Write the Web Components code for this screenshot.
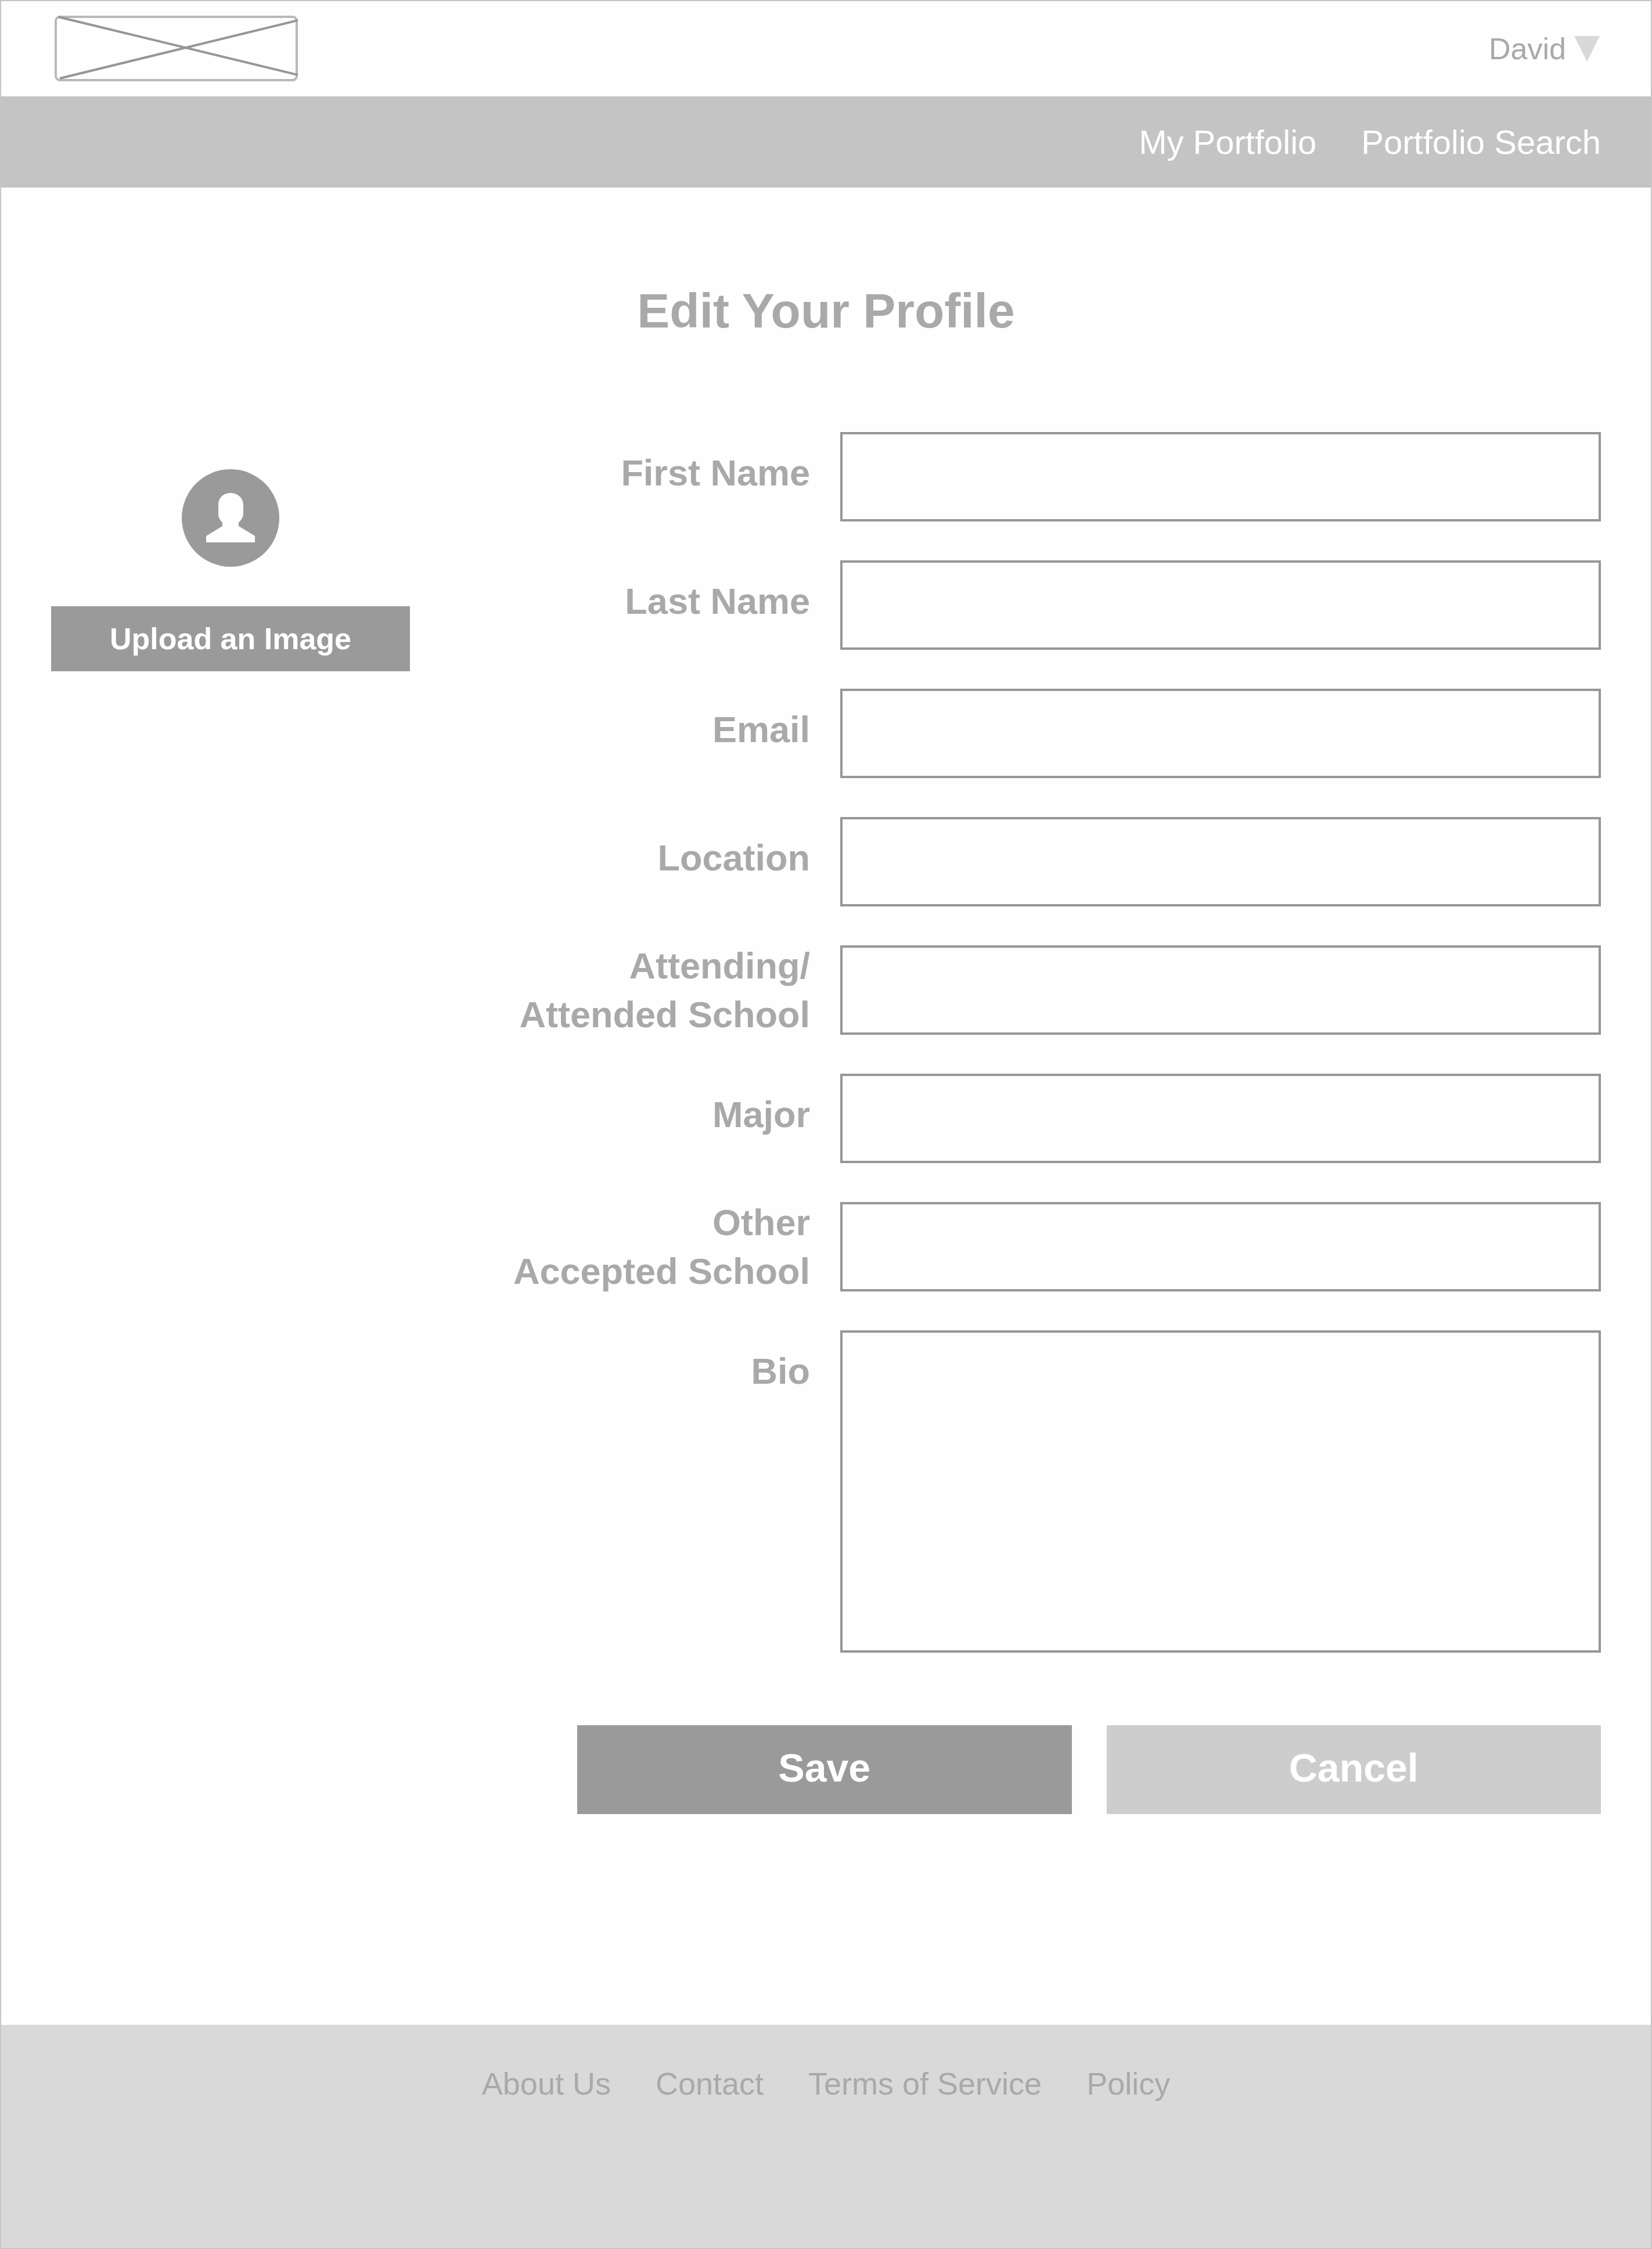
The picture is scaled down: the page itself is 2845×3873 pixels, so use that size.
<!DOCTYPE html>
<html lang="en">
<head>
<meta charset="utf-8">
<meta name="viewport" content="width=device-width, initial-scale=1">
<title>Edit Your Profile</title>
<style>
  html, body { margin: 0; height: 100%; }
  body {
    font-family: "Liberation Sans", Arial, Helvetica, sans-serif;
    color: #a9a9a9;
    background: #fefefe;
    --gutter: 86px;
    --accent: #9a9a9a;
    --muted: #cdcdcd;
    --line: #969696;
  }
</style>
</head>
<body>
<app-shell>
  <site-header slot="header">David</site-header>
  <site-nav slot="nav">
    <nav-link href="#portfolio">My Portfolio</nav-link>
    <nav-link href="#search">Portfolio Search</nav-link>
  </site-nav>
  <profile-editor heading="Edit Your Profile">
    <avatar-upload slot="aside">Upload an Image</avatar-upload>
    <form-field name="first">First Name</form-field>
    <form-field name="last">Last Name</form-field>
    <form-field name="email" type="email">Email</form-field>
    <form-field name="location">Location</form-field>
    <form-field name="school" stacked>Attending/<br>Attended School</form-field>
    <form-field name="major">Major</form-field>
    <form-field name="other" stacked>Other<br>Accepted School</form-field>
    <form-field name="bio" multiline>Bio</form-field>
    <action-button slot="actions">Save</action-button>
    <action-button slot="actions" secondary>Cancel</action-button>
  </profile-editor>
  <site-footer slot="footer">
    <nav-link href="#about">About Us</nav-link>
    <nav-link href="#contact">Contact</nav-link>
    <nav-link href="#terms">Terms of Service</nav-link>
    <nav-link href="#policy">Policy</nav-link>
  </site-footer>
</app-shell>

<script>
const define = (name, render) => customElements.define(name, class extends HTMLElement {
  constructor() {
    super();
    this.attachShadow({ mode: 'open' });
  }
  connectedCallback() {
    this.shadowRoot.innerHTML = render(this);
  }
});

define('app-shell', () => `
  <style>
    :host { display: flex; flex-direction: column; box-sizing: border-box; min-height: 100%; border: 2px solid #c6c6c6; }
    main { display: block; }
    ::slotted([slot="footer"]) { flex: 1; }
  </style>
  <slot name="header"></slot>
  <slot name="nav"></slot>
  <main><slot></slot></main>
  <slot name="footer"></slot>`);

define('site-header', () => `
  <style>
    :host { display: block; }
    header { display: flex; align-items: center; justify-content: space-between; height: 164px; padding: 0 var(--gutter); }
    a { display: block; padding-left: 4px; }
    svg { display: block; }
    button { display: flex; align-items: center; gap: 14px; padding: 0 2px 0 0; border: 0; background: none; font: inherit; font-size: 52px; line-height: 64px; color: inherit; cursor: pointer; }
  </style>
  <header>
    <a href="#home" aria-label="Home">
      <svg width="424" height="116" viewBox="0 0 424 116" fill="none">
        <rect x="4" y="3" width="415" height="109" rx="7" stroke="#b9b9b9" stroke-width="4"/>
        <path d="M8 3 421 103M11 109 421 9" stroke="#969696" stroke-width="4"/>
      </svg>
    </a>
    <button type="button" aria-haspopup="menu">
      <span><slot></slot></span>
      <svg width="44" height="44" viewBox="0 0 44 44"><path d="M0 0H44L22 44Z" fill="#d8d8d8"/></svg>
    </button>
  </header>`);

define('site-nav', () => `
  <style>
    :host { display: block; background: #c4c4c4; color: #fff; }
    nav { display: flex; align-items: center; justify-content: flex-end; gap: 77px; min-height: 157px; padding: 0 var(--gutter); font-size: 58px; line-height: 72px; }
  </style>
  <nav><slot></slot></nav>`);

define('nav-link', el => `
  <style>
    :host { display: block; white-space: nowrap; }
    a { color: inherit; text-decoration: none; }
  </style>
  <a href="${el.getAttribute('href')}"><slot></slot></a>`);

define('profile-editor', el => `
  <style>
    :host { display: block; padding: 164px var(--gutter) 363px; }
    h1 { margin: 0 0 161px; font-size: 84px; line-height: 96px; text-align: center; }
    .columns { display: flex; align-items: flex-start; }
    aside { flex: none; }
    form { flex: 1; min-width: 0; }
    .fields { display: flex; flex-direction: column; gap: 67px; }
    .actions { display: flex; gap: 60px; margin-top: 125px; padding-left: 288px; }
  </style>
  <h1>${el.getAttribute('heading')}</h1>
  <div class="columns">
    <aside><slot name="aside"></slot></aside>
    <form>
      <div class="fields"><slot></slot></div>
      <div class="actions"><slot name="actions"></slot></div>
    </form>
  </div>`);

define('avatar-upload', () => `
  <style>
    :host { display: flex; flex-direction: column; align-items: center; gap: 68px; width: 618px; padding-top: 64px; }
    svg { display: block; }
    button { width: 100%; height: 112px; padding: 0; border: 0; background: var(--accent); color: #fff; font: inherit; font-size: 52px; font-weight: bold; line-height: 64px; cursor: pointer; }
  </style>
  <svg width="168" height="168" viewBox="0 0 168 168" role="img" aria-label="Profile picture">
    <circle cx="84" cy="84" r="84" fill="#9a9a9a"/>
    <path fill="#fefefe" d="M84 41C71 41 63 50 63 62V76C63 83 66 88 70 92V98L42 115V126H126V115L98 98V92C102 88 106 83 106 76V62C106 50 97 41 84 41Z"/>
  </svg>
  <button type="button"><slot></slot></button>`);

define('form-field', el => {
  const name = el.getAttribute('name');
  const control = el.hasAttribute('multiline')
    ? `<textarea id="${name}" name="${name}"></textarea>`
    : `<input id="${name}" name="${name}" type="${el.getAttribute('type') || 'text'}">`;
  return `
  <style>
    :host { display: grid; grid-template-columns: 689fr 1310fr; column-gap: 52px; align-items: start; }
    label { padding-top: 28px; font-size: 63px; font-weight: bold; line-height: 84px; text-align: right; }
    :host([stacked]) { align-items: center; }
    :host([stacked]) label { padding-top: 0; margin: -7px 0; }
    input, textarea { display: block; box-sizing: border-box; width: 100%; height: 154px; margin: 0; padding: 0 32px; border: 4px solid var(--line); border-radius: 0; background: #fefefe; color: inherit; font: inherit; font-size: 52px; outline: 0; }
    textarea { height: 555px; padding: 32px; resize: none; }
  </style>
  <label for="${name}"><slot></slot></label>
  ${control}`;
});

define('action-button', el => `
  <style>
    :host { display: block; flex: 1; }
    button { display: block; width: 100%; height: 153px; padding: 0 0 8px; border: 0; background: var(--accent); color: #fff; font: inherit; font-size: 68px; font-weight: bold; line-height: 84px; cursor: pointer; }
    :host([secondary]) button { background: var(--muted); }
  </style>
  <button type="${el.hasAttribute('secondary') ? 'reset' : 'submit'}"><slot></slot></button>`);

define('site-footer', () => `
  <style>
    :host { display: block; background: #d9d9d9; }
    footer { display: flex; justify-content: center; gap: 77px; padding: 69px var(--gutter); font-size: 54px; line-height: 64px; }
  </style>
  <footer><slot></slot></footer>`);
</script>
</body>
</html>
